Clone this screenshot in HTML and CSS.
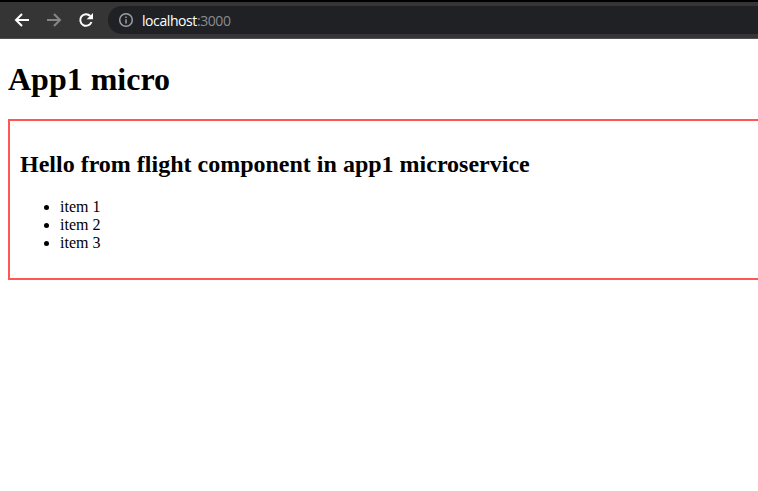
FILE: index.html
```html
<!DOCTYPE html>
<html lang="en">
<head>
<meta charset="utf-8">
<title>App1 micro</title>
<link rel="stylesheet" href="styles.css">
</head>
<body>
<header class="toolbar">
  <svg class="icon" viewBox="0 0 20 20"><path d="M17 10H4M10 4l-6 6 6 6"/></svg>
  <svg class="icon icon-off" viewBox="0 0 20 20"><path d="M3 10h13M10 4l6 6-6 6"/></svg>
  <svg class="icon" viewBox="0 0 20 20"><path d="M15.5 12a5.8 5.8 0 1 1-1.2-6"/><path class="tip" d="M17 3v6.3h-6.3z"/></svg>
  <div class="address">
    <svg class="info" viewBox="0 0 16 16"><circle cx="8" cy="8" r="6.3"/><path d="M8 7.2v4.3M8 4.4v1.6"/></svg>
    <span class="host">localhost<span class="port">:3000</span></span>
  </div>
</header>
<main class="page">
  <h1>App1 micro</h1>
  <section class="flight">
    <h2>Hello from flight component in app1 microservice</h2>
    <ul><li>item 1</li><li>item 2</li><li>item 3</li></ul>
  </section>
</main>
</body>
</html>
```

FILE: styles.css
```css
body { margin: 0; background: #fff; color: #000; font: 16px "Liberation Serif", "Times New Roman", serif; overflow: hidden; }
.toolbar { box-sizing: border-box; height: 39px; padding: 4px 0 0 12px; border-top: 2px solid #000; border-bottom: 1px solid #504e50; background: #353535; display: flex; align-items: flex-start; }
.icon { flex: none; width: 20px; height: 20px; margin: 4px 12px 0 0; fill: none; stroke: #fff; stroke-width: 2; }
.icon-off { stroke: #868686; }
.tip { fill: #fff; stroke: none; }
.address { flex: 1; height: 28px; padding-left: 10px; border-radius: 14px 0 0 14px; background: #202124; display: flex; align-items: center; }
.info { width: 16px; height: 16px; fill: none; stroke: #9aa0a6; stroke-width: 1.5; }
.host { margin-left: 8px; color: #fff; font: 14px "Open Sans", "Noto Sans", sans-serif; letter-spacing: -.42px; }
.port { color: #8b8b8d; }
.page { padding: 21px 0 0 8px; }
h1 { margin: 0 0 21px; font-size: 32px; line-height: 38px; }
.flight { box-sizing: border-box; height: 161px; padding: 10px; border: 2px solid #f55; border-right: 0; }
h2 { margin: 20px 0; font-size: 24px; line-height: 27px; }
ul { margin: 0; padding-left: 40px; line-height: 18px; }
```
